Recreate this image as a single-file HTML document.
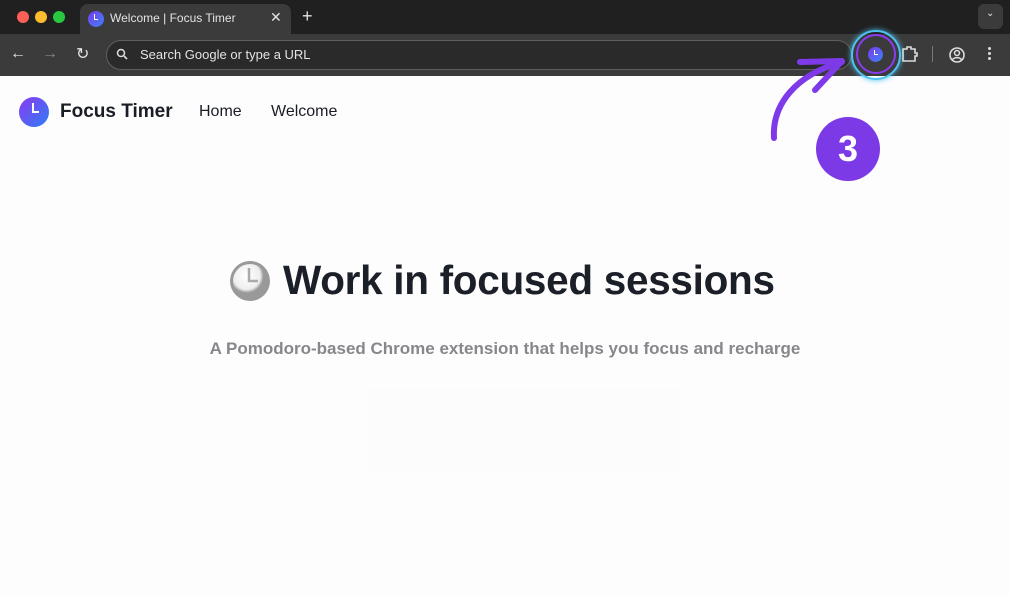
<!DOCTYPE html>
<html><head><meta charset="utf-8"><style>
*{margin:0;padding:0;box-sizing:border-box}
body{width:1010px;height:596px;overflow:hidden;background:#fdfdfe;font-family:"Liberation Sans",sans-serif;position:relative}
.strip{position:absolute;left:0;top:0;width:1010px;height:34px;background:#202020}
.dot{position:absolute;top:11px;width:12px;height:12px;border-radius:50%}
.tab{position:absolute;left:80px;top:4px;width:211px;height:30px;background:#3b3b3b;border-radius:8px 8px 0 0}
.tb{position:absolute;left:0;top:34px;width:1010px;height:42px;background:#3b3b3b}
.omni{position:absolute;left:106px;top:40px;width:746px;height:30px;border-radius:15px;background:#2a2a2a;border:1px solid #5f5f5f;color:#e3e3e3;font-size:13px;line-height:28px;padding-left:33px}
.w{color:#e3e3e3;position:absolute}
</style></head><body>
<div class="strip"></div>
<div class="dot" style="left:17px;background:#fe5f57"></div>
<div class="dot" style="left:35px;background:#febc2e"></div>
<div class="dot" style="left:53px;background:#28c840"></div>
<div class="tab">
 <div style="position:absolute;left:8px;top:7px;width:16px;height:16px;border-radius:50%;background:linear-gradient(135deg,#7c3aed,#3b82f6)"></div>
 <div style="position:absolute;left:14px;top:10px;width:4px;height:6px;border-left:1.5px solid #fff;border-bottom:1.5px solid #fff"></div>
 <div class="w" style="left:30px;top:7px;font-size:12px">Welcome | Focus Timer</div>
 <div class="w" style="left:190px;top:5px;font-size:14px">✕</div>
</div>
<div class="w" style="left:302px;top:6px;font-size:18px">+</div>
<div style="position:absolute;left:978px;top:4px;width:25px;height:25px;border-radius:6px;background:#3b3b3b"></div>
<div class="w" style="left:986px;top:8px;font-size:10px">⌄</div>
<div class="tb"></div>
<div class="w" style="left:10px;top:45px;font-size:16px">←</div>
<div class="w" style="left:42px;top:45px;font-size:16px;color:#888">→</div>
<div class="w" style="left:76px;top:44px;font-size:16px">↻</div>
<div class="omni">Search Google or type a URL</div>
<svg style="position:absolute;left:116px;top:48px" width="13" height="13"><circle cx="5" cy="5" r="3.5" stroke="#ddd" stroke-width="1.5" fill="none"/><line x1="8" y1="8" x2="11" y2="11" stroke="#ddd" stroke-width="1.6"/></svg>
<div style="position:absolute;left:851px;top:30px;width:50px;height:50px;border-radius:50%;border:2px solid #4cc3f0;box-shadow:0 0 6px #4cc3f0"></div>
<div style="position:absolute;left:856px;top:34px;width:40px;height:40px;border-radius:50%;border:2px solid #8a3bf0"></div>
<div style="position:absolute;left:868px;top:47px;width:15px;height:15px;border-radius:50%;background:linear-gradient(135deg,#7c3aed,#3b82f6)"></div>
<div style="position:absolute;left:874px;top:50px;width:4px;height:5px;border-left:1.5px solid #fff;border-bottom:1.5px solid #fff"></div>
<svg style="position:absolute;left:900px;top:45px" width="20" height="18"><path d="M3 4h4v-2h4v2h4v4h2v3h-2v5H3z" stroke="#ddd" stroke-width="1.6" fill="none"/></svg>
<div style="position:absolute;left:932px;top:46px;width:1px;height:16px;background:#777"></div>
<svg style="position:absolute;left:948px;top:46px" width="18" height="18"><circle cx="9" cy="9" r="7" stroke="#ddd" stroke-width="1.6" fill="none"/><circle cx="9" cy="7" r="2.5" stroke="#ddd" stroke-width="1.5" fill="none"/><path d="M4.5 13.5c2.5-2.5 6.5-2.5 9 0" stroke="#ddd" stroke-width="1.5" fill="none"/></svg>
<div style="position:absolute;left:988px;top:47px;width:3px;height:3px;background:#ddd;border-radius:50%;box-shadow:0 5px #ddd,0 10px #ddd"></div>
<svg style="position:absolute;left:760px;top:50px" width="100" height="100"><path d="M14 88C12 55 35 25 82 12" stroke="#7e3ae8" stroke-width="6" fill="none" stroke-linecap="round"/><path d="M40 12L82 11L55 40" stroke="#7e3ae8" stroke-width="6" fill="none" stroke-linecap="round" stroke-linejoin="round"/></svg>
<div style="position:absolute;left:816px;top:117px;width:64px;height:64px;border-radius:50%;background:#7b3ae6;color:#fff;font-weight:bold;font-size:36px;text-align:center;line-height:64px">3</div>
<div style="position:absolute;left:19px;top:97px;width:30px;height:30px;border-radius:50%;background:linear-gradient(135deg,#8b3bf0,#2f7cf6)"></div>
<div style="position:absolute;left:32px;top:103px;width:7px;height:10px;border-left:2.5px solid #fff;border-bottom:2.5px solid #fff"></div>
<div style="position:absolute;left:60px;top:101px;font-size:19px;font-weight:bold;color:#1a1d24">Focus Timer</div>
<div style="position:absolute;left:199px;top:103px;font-size:16px;color:#1a1d24">Home</div>
<div style="position:absolute;left:271px;top:103px;font-size:16px;color:#1a1d24">Welcome</div>
<svg style="position:absolute;left:227px;top:259px" width="46" height="44"><defs><radialGradient id="g" cx=".4" cy=".35"><stop offset="0" stop-color="#fff"/><stop offset=".8" stop-color="#eee"/><stop offset="1" stop-color="#999"/></radialGradient></defs><circle cx="23" cy="22" r="20" fill="#999"/><circle cx="23" cy="22" r="17" fill="url(#g)"/><path d="M22 9v13h9" stroke="#aaa" stroke-width="2.5" fill="none"/></svg>
<div style="position:absolute;left:283px;top:257px;font-size:40.5px;font-weight:bold;color:#1b1f27;letter-spacing:-0.3px;white-space:nowrap">Work in focused sessions</div>
<div style="position:absolute;left:0;width:1010px;top:339px;text-align:center;font-size:17px;color:#86878b;font-weight:bold;letter-spacing:0px">A Pomodoro-based Chrome extension that helps you focus and recharge</div>
<div style="position:absolute;left:367px;top:388px;width:313px;height:86px;background:#fcfcfd"></div>
</body></html>
